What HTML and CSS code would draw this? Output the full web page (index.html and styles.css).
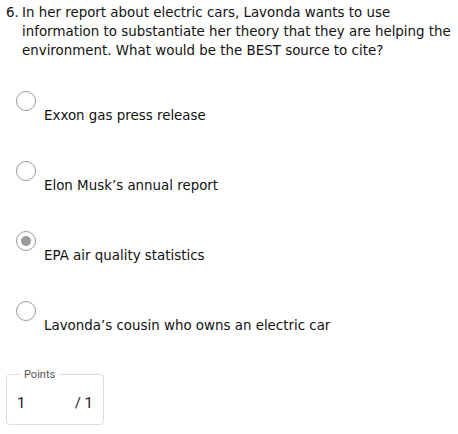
FILE: index.html
```html
<!DOCTYPE html>
<html>
<head>
<meta charset="utf-8">
<link rel="stylesheet" href="styles.css">
</head>
<body>
<div class="question">
  <span class="num">6.</span>
  <span class="qtext">In her report about electric cars, Lavonda wants to use information to substantiate her theory that they are helping the environment. What would be the BEST source to cite?</span>
</div>
<div class="options">
  <div class="option"><span class="radio"></span><span class="label">Exxon gas press release</span></div>
  <div class="option"><span class="radio"></span><span class="label">Elon Musk’s annual report</span></div>
  <div class="option"><span class="radio checked"></span><span class="label">EPA air quality statistics</span></div>
  <div class="option"><span class="radio"></span><span class="label">Lavonda’s cousin who owns an electric car</span></div>
</div>
<fieldset class="points">
  <legend>Points</legend>
  <div class="score"><span>1</span><span class="total">/ 1</span></div>
</fieldset>
</body>
</html>
```
FILE: styles.css
```css
html, body {
  margin: 0;
  padding: 0;
  background: #fff;
}
body {
  font-family: "DejaVu Sans", Verdana, sans-serif;
  font-size: 13.4px;
  color: #111;
}
.question {
  display: flex;
  padding: 3px 2px 0 6px;
  line-height: 19px;
}
.num {
  flex: 0 0 16px;
}
.qtext {
  flex: 1;
}
.options {
  display: flex;
  flex-direction: column;
  padding-top: 31px;
  padding-left: 16px;
}
.option {
  display: flex;
  align-items: flex-start;
  height: 70px;
}
.radio {
  box-sizing: border-box;
  width: 20px;
  height: 20px;
  border: 1.5px solid #9a9a9a;
  border-radius: 50%;
  display: flex;
  align-items: center;
  justify-content: center;
  flex: 0 0 20px;
}
.radio.checked::after {
  content: "";
  width: 10px;
  height: 10px;
  border-radius: 50%;
  background: #9a9a9a;
}
.label {
  margin-left: 8px;
  padding-top: 17px;
  line-height: 16px;
}
.points {
  margin: -3px 0 0 6px;
  width: 98px;
  box-sizing: border-box;
  height: 57px;
  border: 1px solid #dcdcdc;
  border-radius: 4px;
  padding: 0 10px;
  font-family: Roboto, "Liberation Sans", sans-serif;
}
.points legend {
  font-size: 11px;
  color: #555;
  padding: 0 4px;
  margin-left: 3px;
}
.score {
  display: flex;
  justify-content: space-between;
  font-size: 15px;
  color: #222;
  padding-top: 13px;
}
.total {
  padding-right: 0;
}
```
